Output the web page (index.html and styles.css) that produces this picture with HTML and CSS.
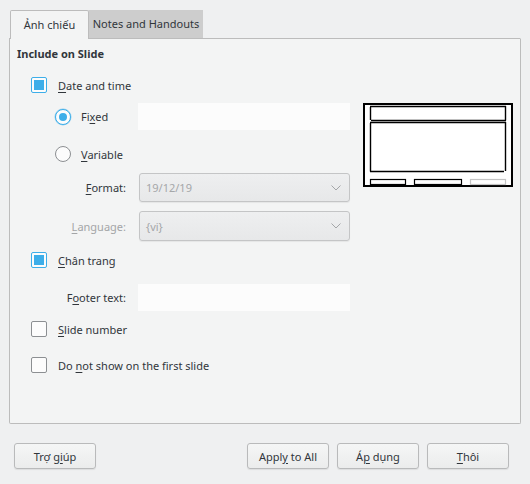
FILE: index.html
```html
<!DOCTYPE html>
<html lang="vi">
<head>
<meta charset="utf-8">
<title>Header and Footer</title>
<link rel="stylesheet" href="styles.css">
</head>
<body>
<div class="dialog">
  <div class="tabs">
    <div class="tab-gap"></div>
    <div class="tab active">Ảnh chiếu</div>
    <div class="tab inactive">Notes and Handouts</div>
    <div class="tab-fill"></div>
  </div>
  <div class="panel">
    <div class="heading">Include on Slide</div>
    <div class="cols">
      <div class="left">
        <div class="row check-row"><span class="check on"></span><span class="lbl"><u>D</u>ate and time</span></div>
        <div class="row radio-row r-fixed"><span class="radio on"></span><span class="rlbl">Fi<u>x</u>ed</span><span class="field"></span></div>
        <div class="row radio-row r-var"><span class="radio"></span><span class="rlbl"><u>V</u>ariable</span></div>
        <div class="row form-row r-format"><span class="flabel"><u>F</u>ormat:</span><span class="combo"><span>19/12/19</span><svg class="chev" width="10" height="6" viewBox="0 0 10 6"><polyline points="0.5,0.5 5,5 9.5,0.5" fill="none" stroke="#a4a6a8" stroke-width="1"/></svg></span></div>
        <div class="row form-row r-lang"><span class="flabel disabled"><u>L</u>anguage:</span><span class="combo"><span>{vi}</span><svg class="chev" width="10" height="6" viewBox="0 0 10 6"><polyline points="0.5,0.5 5,5 9.5,0.5" fill="none" stroke="#a4a6a8" stroke-width="1"/></svg></span></div>
        <div class="row check-row r-footer"><span class="check on"></span><span class="lbl"><u>C</u>hân trang</span></div>
        <div class="row form-row r-ftext"><span class="flabel">F<u>o</u>oter text:</span><span class="field ffield"></span></div>
        <div class="row check-row"><span class="check"></span><span class="lbl"><u>S</u>lide number</span></div>
        <div class="row check-row"><span class="check"></span><span class="lbl">Do <u>n</u>ot show on the first slide</span></div>
      </div>
      <div class="preview">
        <svg width="150" height="84" viewBox="0 0 150 84">
          <rect x="1" y="1" width="148" height="82" fill="#ffffff" stroke="#000" stroke-width="2"/>
          <path d="M7.5 4 V17 M7 3.5 H143 M142.5 3 V17.5 M8 17.5 H143" fill="none" stroke="#000" stroke-width="1.4"/>
          <path d="M7.5 20 V68.5 M7 19.5 H143 M142.5 19 V68 M7 68.5 H141" fill="none" stroke="#000" stroke-width="1.4"/>
          <rect x="7.5" y="76.5" width="35" height="5" fill="none" stroke="#000" stroke-width="1.2"/>
          <rect x="51.5" y="76.5" width="47" height="5" fill="none" stroke="#000" stroke-width="1.2"/>
          <rect x="107.5" y="76.5" width="35" height="5" fill="none" stroke="#c4c4c4" stroke-width="1.2"/>
        </svg>
      </div>
    </div>
  </div>
  <div class="buttons">
    <button class="btn">Trợ g<u>i</u>úp</button>
    <div class="spacer"></div>
    <button class="btn">Appl<u>y</u> to All</button>
    <button class="btn">Á<u>p</u> dụng</button>
    <button class="btn"><u>T</u>hôi</button>
  </div>
</div>
</body>
</html>
```

FILE: styles.css
```css
html, body {
  margin: 0;
  padding: 0;
}
body {
  width: 530px;
  height: 484px;
  overflow: hidden;
  background: #eff0f1;
  font-family: "Noto Sans", "Open Sans", sans-serif;
  font-size: 11px;
  color: #31363b;
}
u {
  text-decoration-thickness: 1px;
  text-underline-offset: 2px;
}
.dialog {
  padding-top: 10px;
}
.tabs {
  display: flex;
  margin-left: 9px;
  width: 512px;
  height: 29px;
}
.tab-gap {
  width: 1px;
  border-bottom: 1px solid #bcbcbc;
}
.tab {
  box-sizing: border-box;
  height: 29px;
  display: flex;
  align-items: center;
  justify-content: center;
}
.tab.active {
  width: 79px;
  border: 1px solid #bcbcbc;
  border-bottom: none;
  border-radius: 2px 2px 0 0;
  background: #f3f4f4;
  padding-bottom: 2px;
}
.tab.inactive {
  width: 114px;
  background: #cdcdcd;
  border-bottom: 1px solid #bcbcbc;
  padding-bottom: 1px;
}
.tab-fill {
  flex: 1;
  border-bottom: 1px solid #bcbcbc;
  border-right: 1px solid transparent;
}
.panel {
  box-sizing: border-box;
  margin-left: 9px;
  width: 512px;
  height: 385px;
  border: 1px solid #bcbcbc;
  border-top: none;
  border-radius: 0 0 2px 2px;
  background: #f3f4f4;
}
.heading {
  height: 28px;
  padding-left: 7px;
  display: flex;
  align-items: center;
  font-weight: bold;
}
.cols {
  display: flex;
}
.left {
  width: 340px;
  display: flex;
  flex-direction: column;
}
.preview {
  margin-left: 13px;
  margin-top: 36px;
  width: 150px;
  height: 84px;
}
.preview svg {
  display: block;
}
.row {
  display: flex;
  align-items: center;
}
.check-row {
  padding-left: 21px;
  height: 36px;
}
.check-row .lbl {
  margin-left: 11px;
}
.r-footer {
  height: 38px;
}
.check {
  box-sizing: border-box;
  width: 16px;
  height: 16px;
  border: 1px solid #8c8f92;
  border-radius: 2px;
  background: #fcfcfc;
  padding: 2px;
}
.check.on {
  border-color: #3daee9;
}
.check.on::after {
  content: "";
  display: block;
  width: 10px;
  height: 10px;
  background: #3daee9;
}
.radio-row {
  padding-left: 45px;
}
.r-fixed {
  height: 27px;
}
.r-var {
  height: 28px;
  margin-top: 10px;
  margin-bottom: 5px;
}
.radio {
  box-sizing: border-box;
  width: 16px;
  height: 16px;
  border: 1px solid #8c8f92;
  border-radius: 50%;
  background: #fcfcfc;
  display: flex;
  align-items: center;
  justify-content: center;
}
.radio.on {
  border-color: #3daee9;
  box-shadow: 0 0 0 0.5px rgba(61, 174, 233, 0.5);
}
.radio.on::after {
  content: "";
  width: 8px;
  height: 8px;
  border-radius: 50%;
  background: #3daee9;
}
.rlbl {
  margin-left: 10px;
  width: 57px;
}
.field {
  width: 212px;
  height: 27px;
  background: #fcfcfc;
}
.form-row .flabel {
  width: 116px;
  text-align: right;
  margin-right: 13px;
}
.flabel.disabled {
  color: #a3a5a7;
}
.r-format {
  height: 29px;
  margin-bottom: 9px;
}
.r-lang {
  height: 30px;
}
.r-ftext {
  height: 27px;
  margin-top: 5px;
}
.r-ftext .flabel {
  margin-right: 12px;
}
.combo {
  box-sizing: border-box;
  width: 211px;
  height: 100%;
  display: flex;
  align-items: center;
  justify-content: space-between;
  padding: 0 8px 0 6px;
  border: 1px solid #c4c5c6;
  border-radius: 3px;
  background: linear-gradient(#eeeff0, #e7e8e9);
  box-shadow: 0 1px 1px rgba(0, 0, 0, 0.06);
  color: #a5a7a9;
}
.chev {
  display: block;
}
.buttons {
  display: flex;
  margin-top: 19px;
  padding: 0 21px 0 14px;
  gap: 8px;
}
.spacer {
  flex: 1;
}
.btn {
  box-sizing: border-box;
  width: 82px;
  height: 26px;
  margin: 0;
  padding: 0;
  border: 1px solid #b9babb;
  border-radius: 3px;
  background: linear-gradient(#f5f6f6, #ebecec);
  box-shadow: 0 1px 1px rgba(0, 0, 0, 0.08);
  font-family: inherit;
  font-size: 11px;
  color: #31363b;
}
```
